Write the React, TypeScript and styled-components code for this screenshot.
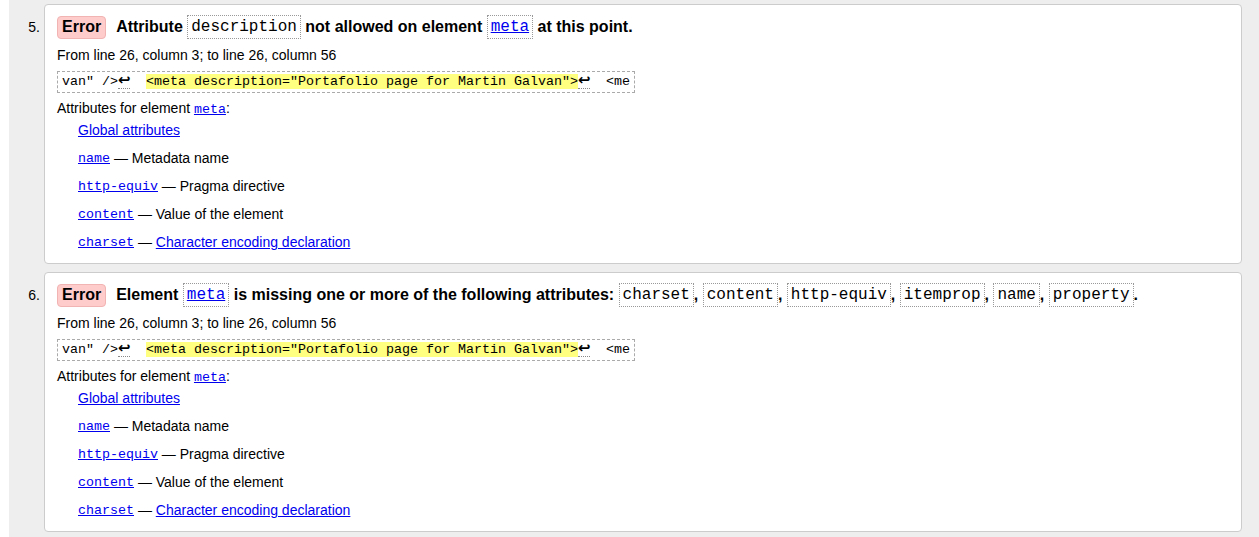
import styled, { createGlobalStyle } from 'styled-components';

const GlobalStyle = createGlobalStyle`
  html, body {
    margin: 0;
    padding: 0;
    background: #fff;
  }
  body {
    font-family: "Liberation Sans", Arial, sans-serif;
    font-size: 14px;
    color: #000;
  }
`;

const Page = styled.main`
  margin-left: 9px;
  min-height: 537px;
  background: #eeeeee;
  padding-top: 4px;
  padding-right: 17px;
  overflow: hidden;
`;

const MessageList = styled.ol`
  list-style: none;
  margin: 0;
  padding: 0;
  display: flex;
  flex-direction: column;
  gap: 8px;
`;

const Message = styled.li`
  display: flex;
  align-items: flex-start;
`;

const Marker = styled.span`
  width: 35px;
  flex: none;
  box-sizing: border-box;
  padding-right: 4px;
  padding-top: 14px;
  text-align: right;
  line-height: 18px;
  font-size: 14px;
`;

const Card = styled.div`
  flex: 1;
  background: #fff;
  border: 1px solid #cccccc;
  border-radius: 4px;
  padding: 10px 12px 7px 12px;
`;

const Title = styled.div`
  display: flex;
  align-items: center;
  height: 24px;
  font-weight: bold;
  font-size: 16px;
  white-space: nowrap;
`;

const Badge = styled.span`
  display: inline-flex;
  align-items: center;
  height: 21px;
  padding: 0 4px;
  margin-right: 10px;
  background: #ffcccc;
  border: 1px solid #f2b3b3;
  border-radius: 4px;
  font-weight: bold;
  font-size: 16px;
`;

const TitleText = styled.span`
  line-height: 24px;
`;

const Code = styled.code`
  display: inline-block;
  font-family: "Liberation Mono", "Courier New", monospace;
  font-weight: normal;
  font-size: 16px;
  line-height: 20px;
  padding: 1px 3px;
  border: 1px dotted #999;
  vertical-align: middle;
  margin-top: -2px;
`;

const CodeLink = styled.a`
  color: #0000ee;
  text-decoration: underline;
`;

const Location = styled.p`
  margin: 7px 0 0;
  line-height: 18px;
`;

const Extract = styled.pre`
  display: inline-block;
  margin: 7px 0 0;
  padding: 1px 4px;
  border: 1px dashed #aaaaaa;
  font-family: "Liberation Mono", "Courier New", monospace;
  font-size: 13.33px;
  line-height: 18px;
`;

const LineFeed = styled.span`
  display: inline-block;
  width: 12px;
  line-height: 15px;
  font-family: "DejaVu Sans", "Liberation Sans", sans-serif;
  font-size: 15px;
  font-weight: bold;
  text-align: center;
  border-bottom: 1px dotted #888;
`;

const Highlight = styled.mark`
  background: #ffff80;
  color: inherit;
`;

const AttrHeading = styled.p`
  margin: 7px 0 0;
  line-height: 16px;
`;

const SmallCodeLink = styled.a`
  font-family: "Liberation Mono", "Courier New", monospace;
  font-size: 13.33px;
  color: #0000ee;
  text-decoration: underline;
`;

const AttrList = styled.dl`
  margin: -2px 0 0;
  padding-left: 21px;
`;

const AttrItem = styled.dd`
  margin: 0;
  height: 28px;
  display: flex;
  align-items: center;
  white-space: pre;
`;

const TextLink = styled.a`
  color: #0000ee;
  text-decoration: underline;
`;

const NextBlock = styled.div`
  margin: 5px 0 0 94px;
  width: 283px;
  height: 6px;
  border-top: 1px solid #a7c3d2;
  border-left: 1px solid #a7c3d2;
  border-right: 1px solid #a7c3d2;
  background: #e4eef4;
`;

const attributes: { name: string; desc: string; link?: boolean }[] = [
  { name: 'name', desc: 'Metadata name' },
  { name: 'http-equiv', desc: 'Pragma directive' },
  { name: 'content', desc: 'Value of the element' },
  { name: 'charset', desc: 'Character encoding declaration', link: true },
];

function Details() {
  return (
    <>
      <Location>From line 26, column 3; to line 26, column 56</Location>
      <Extract>
        {'van" />'}
        <LineFeed>↩</LineFeed>
        {'  '}
        <Highlight>{'<meta description="Portafolio page for Martin Galvan">'}</Highlight>
        <LineFeed>↩</LineFeed>
        {'  <me'}
      </Extract>
      <AttrHeading>
        Attributes for element <SmallCodeLink href="#">meta</SmallCodeLink>:
      </AttrHeading>
      <AttrList>
        <AttrItem>
          <TextLink href="#">Global attributes</TextLink>
        </AttrItem>
        {attributes.map((a) => (
          <AttrItem key={a.name}>
            <SmallCodeLink href="#">{a.name}</SmallCodeLink>
            {' — '}
            {a.link ? <TextLink href="#">{a.desc}</TextLink> : a.desc}
          </AttrItem>
        ))}
      </AttrList>
    </>
  );
}

const missing = ['charset', 'content', 'http-equiv', 'itemprop', 'name', 'property'];

function App() {
  return (
    <>
      <GlobalStyle />
      <Page>
        <MessageList>
          <Message>
            <Marker>5.</Marker>
            <Card>
              <Title>
                <Badge>Error</Badge>
                <TitleText>
                  Attribute <Code>description</Code> not allowed on element{' '}
                  <Code>
                    <CodeLink href="#">meta</CodeLink>
                  </Code>{' '}
                  at this point.
                </TitleText>
              </Title>
              <Details />
            </Card>
          </Message>
          <Message>
            <Marker>6.</Marker>
            <Card>
              <Title>
                <Badge>Error</Badge>
                <TitleText>
                  Element{' '}
                  <Code>
                    <CodeLink href="#">meta</CodeLink>
                  </Code>{' '}
                  is missing one or more of the following attributes:{' '}
                  {missing.map((m, i) => (
                    <span key={m}>
                      <Code>{m}</Code>
                      {i < missing.length - 1 ? ', ' : '.'}
                    </span>
                  ))}
                </TitleText>
              </Title>
              <Details />
            </Card>
          </Message>
        </MessageList>
        <NextBlock />
      </Page>
    </>
  );
}

export default App;
